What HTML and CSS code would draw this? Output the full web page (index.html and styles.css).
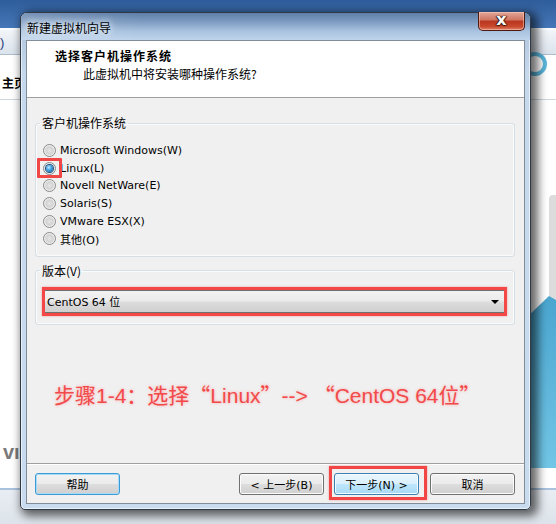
FILE: index.html
```html
<!DOCTYPE html>
<html lang="zh">
<head>
<meta charset="utf-8">
<title>新建虚拟机向导</title>
<link rel="stylesheet" href="styles.css">
</head>
<body>
<div class="desktop">
  <div class="app">
    <div class="app-toolbar"><span class="app-paren">)</span></div>
    <div class="app-tabs"><span class="app-tab">主页</span></div>
    <div class="app-content">
      <span class="app-logo">vı</span>
    </div>
    <div class="app-status"></div>
    <div class="app-right-ring"></div>
    <div class="app-right-card"></div>
    <div class="app-right-blue"></div>
  </div>

  <div class="window">
    <div class="titlebar">
      <span class="title">新建虚拟机向导</span>
      <span class="close-btn"><span class="close-x">x</span></span>
    </div>
    <div class="client">
      <div class="header">
        <div class="header-title">选择客户机操作系统</div>
        <div class="header-sub">此虚拟机中将安装哪种操作系统?</div>
      </div>
      <div class="body">
        <fieldset class="group">
          <legend class="group-label">客户机操作系统</legend>
          <div class="radio-list">
            <div class="radio-row"><span class="radio"></span><span class="radio-text">Microsoft Windows(W)</span></div>
            <div class="radio-row"><span class="radio checked"><span class="mark"></span></span><span class="radio-text">Linux(L)</span></div>
            <div class="radio-row"><span class="radio"></span><span class="radio-text">Novell NetWare(E)</span></div>
            <div class="radio-row"><span class="radio"></span><span class="radio-text">Solaris(S)</span></div>
            <div class="radio-row"><span class="radio"></span><span class="radio-text">VMware ESX(X)</span></div>
            <div class="radio-row"><span class="radio"></span><span class="radio-text">其他(O)</span></div>
          </div>
        </fieldset>
        <fieldset class="group group-version">
          <legend class="group-label">版本(V)</legend>
          <div class="highlight-box">
            <div class="combo">
              <span class="combo-text">CentOS 64 位</span>
              <span class="combo-arrow"></span>
            </div>
          </div>
        </fieldset>
        <div class="note">步骤1-4<span class="cjk">：</span>选择<span class="cjk">“</span>Linux<span class="cjk">”</span>--&gt; <span class="cjk">“</span>CentOS 64位<span class="cjk">”</span></div>
      </div>
      <div class="footer">
        <button class="btn btn-focus">帮助</button>
        <div class="nav">
          <button class="btn">&lt; 上一步(B)</button>
          <button class="btn btn-default">下一步(N) &gt;<span class="btn-mark"></span></button>
          <button class="btn btn-cancel">取消</button>
        </div>
      </div>
    </div>
  </div>
</div>
</body>
</html>
```

FILE: styles.css
```css
html, body {
  margin: 0;
  padding: 0;
}
body {
  font-family: "DejaVu Sans", "Noto Sans CJK SC", sans-serif;
  font-size: 11px;
  color: #000;
}
.desktop {
  position: relative;
  width: 556px;
  height: 524px;
  overflow: hidden;
  background: linear-gradient(#2f5d9b, #4677b8 28px, #4677b8);
}

/* background application window */
.app {
  position: absolute;
  left: 0;
  top: 28px;
  width: 556px;
  height: 496px;
  background: #fff;
  display: flex;
  flex-direction: column;
}
.app-toolbar {
  height: 27px;
  background: linear-gradient(#f2f5f9, #dbe3ec);
  border-top: 2px solid #fbfcfd;
  border-bottom: 1px solid #aebdcc;
  box-sizing: border-box;
  display: flex;
  align-items: center;
}
.app-paren {
  font-family: "Liberation Sans", sans-serif;
  font-size: 13px;
  color: #1e3c78;
  margin-left: 0;
}
.app-tabs {
  height: 45px;
  border-bottom: 1px solid #cfd6de;
  box-sizing: border-box;
  display: flex;
  align-items: center;
  padding-top: 10px;
}
.app-tab {
  font-family: "Noto Sans CJK SC", sans-serif;
  font-weight: bold;
  font-size: 12px;
  margin-left: 2px;
}
.app-content {
  flex: 1;
  position: relative;
}
.app-logo {
  position: absolute;
  left: 3px;
  bottom: 24px;
  font-family: "Liberation Sans", sans-serif;
  font-weight: bold;
  font-size: 20px;
  color: #7a7a7a;
}
.app-status {
  height: 36px;
  background: linear-gradient(#e9eef4, #dde3ea);
  border-top: 2px solid #a9c3de;
  box-sizing: border-box;
}
.app-right-ring {
  position: absolute;
  left: 523px;
  top: 24px;
  width: 16px;
  height: 16px;
  border: 4px solid #5bb6db;
  border-radius: 50%;
}
.app-right-card {
  position: absolute;
  left: 549px;
  top: 167px;
  width: 14px;
  height: 136px;
  background: #dcdcdc;
  border-radius: 4px;
}
.app-right-blue {
  position: absolute;
  left: 531px;
  top: 268px;
  width: 30px;
  height: 172px;
  background: linear-gradient(#4aa5cf, #72c6e6);
  clip-path: polygon(0 10%, 60% 0, 100% 4%, 100% 100%, 0 100%);
}

/* dialog window */
.window {
  position: absolute;
  left: 20px;
  top: 12px;
  width: 511px;
  height: 498px;
  box-sizing: border-box;
  border: 1px solid #303a46;
  border-radius: 7px 7px 5px 5px;
  background: linear-gradient(#a9c0da, #c5d8ec 60px, #c9dbef);
  box-shadow: 4px 3px 10px 3px rgba(0, 0, 0, 0.6), inset 0 0 0 1px rgba(255,255,255,0.6);
  padding: 0 5px 5px 5px;
  display: flex;
  flex-direction: column;
}
.titlebar {
  height: 27px;
  position: relative;
  display: flex;
  align-items: center;
  margin: 0 -5px;
  padding: 0 6px;
  border-radius: 6px 6px 0 0;
  background:
    linear-gradient(90deg, rgba(255,255,255,0.15) 0, rgba(40,80,130,0.0) 120px, rgba(40,80,130,0) 100%),
    linear-gradient(180deg, #5f7fa8 0, #7f9dc2 9px, #a8c2df 18px, #bfd4ec 27px);
}
.title {
  font-family: "Noto Sans CJK SC", sans-serif;
  font-size: 12px;
  color: #000;
  margin-top: 1px;
  text-shadow: 0 0 6px #eef4fb, 0 0 8px #eef4fb;
}
.close-btn {
  position: absolute;
  right: 5px;
  top: -1px;
  width: 47px;
  height: 19px;
  box-sizing: border-box;
  border: 1px solid #4d1a12;
  border-top: none;
  border-radius: 0 0 5px 5px;
  background: linear-gradient(#e3a797 0, #cf7461 45%, #b8361e 50%, #c8482c 80%, #e0836a 100%);
  box-shadow: inset 0 0 0 1px rgba(255, 210, 200, 0.5);
  display: flex;
  align-items: center;
  justify-content: center;
}
.close-x {
  font-family: "DejaVu Sans", sans-serif;
  font-weight: bold;
  font-size: 16px;
  line-height: 15px;
  color: #fff;
  margin-top: -3px;
  text-shadow: 0 0 1px #3a1a10, 1px 0 1px #3a1a10, -1px 0 1px #3a1a10, 0 1px 1px #3a1a10;
}

.client {
  flex: 1;
  border: 1px solid #828c98;
  background: #f0f0f0;
  display: flex;
  flex-direction: column;
}
.header {
  height: 57px;
  box-sizing: border-box;
  background: #fff;
  border-bottom: 1px solid #a0a0a0;
  padding: 6px 0 0 28px;
  font-family: "Noto Sans CJK SC", sans-serif;
  font-size: 12px;
  line-height: 18px;
}
.header-title {
  font-weight: bold;
  letter-spacing: 1px;
}
.header-sub {
  padding-left: 28px;
}

.body {
  flex: 1;
  padding: 17px 9px 0 8px;
  display: flex;
  flex-direction: column;
  border-bottom: 1px solid #a0a0a0;
  box-shadow: 0 1px 0 #fff;
}
.group {
  margin: 0;
  padding: 0;
  border: 1px solid #d5dfe5;
  border-radius: 3px;
  box-shadow: inset 0 0 0 1px #fafbfc;
  min-width: 0;
}
.group-label {
  margin-left: 4px;
  padding: 0 2px;
  font-family: "Noto Sans CJK SC", sans-serif;
  font-size: 12px;
  line-height: 16px;
}
.radio-list {
  padding: 11px 0 8px 7px;
  display: flex;
  flex-direction: column;
}
.radio-row {
  height: 17.6px;
  display: flex;
  align-items: center;
}
.radio {
  position: relative;
  width: 13px;
  height: 13px;
  box-sizing: border-box;
  border-radius: 50%;
  border: 1px solid #8a8a8a;
  background: radial-gradient(circle at 50% 50%, #e6e6e6 0, #d2d2d2 45%, #f8f8f8 75%);
  display: flex;
  align-items: center;
  justify-content: center;
  margin-right: 4px;
  flex: none;
}
.radio .mark {
  width: 7px;
  height: 7px;
  border-radius: 50%;
  background: radial-gradient(circle at 40% 35%, #c4ecff 0, #3c9fe0 45%, #14508e 100%);
  box-shadow: 0 0 0 1px #1f4f7f;
}
.radio.checked::after {
  content: "";
  position: absolute;
  left: -7px;
  top: -5px;
  width: 19px;
  height: 14px;
  border: 3px solid #f14646;
  border-radius: 1px;
}
.radio-text {
  font-size: 11px;
  color: #000;
}

.group-version {
  margin-top: 6px;
}
.highlight-box {
  margin: 8px 7px 8px 6px;
  border: 3px solid #f44848;
  box-shadow: 0 0 2px rgba(240, 70, 70, 0.5);
}
.combo {
  height: 23px;
  box-sizing: border-box;
  border-top: 1px solid #6f6f6f;
  border-bottom: 1px solid #6f6f6f;
  background: linear-gradient(#f2f2f2 0, #ebebeb 48%, #dddddd 52%, #cfcfcf 100%);
  display: flex;
  align-items: center;
  justify-content: space-between;
  padding: 0 5px 0 2px;
}
.combo-text {
  font-family: "DejaVu Sans", "Noto Sans CJK SC", sans-serif;
  font-size: 11px;
}
.combo-arrow {
  width: 0;
  height: 0;
  border-left: 4px solid transparent;
  border-right: 4px solid transparent;
  border-top: 4px solid #000;
  margin-top: 1px;
}

.note {
  margin-top: 57px;
  padding-left: 19px;
  font-family: "Liberation Sans", "Noto Sans CJK SC", sans-serif;
  font-size: 21px;
  line-height: 24px;
  color: #f24a4a;
  white-space: nowrap;
  text-shadow: 0 0 3px rgba(255, 120, 120, 0.6);
}
.cjk {
  font-family: "Noto Sans CJK SC", sans-serif;
}

.footer {
  height: 39px;
  box-sizing: border-box;
  padding: 9px 9px 0 8px;
  display: flex;
  justify-content: space-between;
  align-items: flex-start;
}
.nav {
  display: flex;
  gap: 10px;
}
.btn-cancel {
  margin-left: 1px;
}
.btn {
  position: relative;
  width: 85px;
  height: 22px;
  padding: 0;
  border: 1px solid #707070;
  border-radius: 3px;
  background: linear-gradient(#f2f2f2 0, #ebebeb 48%, #dddddd 52%, #cfcfcf 100%);
  box-shadow: inset 0 0 0 1px #fcfcfc;
  font-family: "DejaVu Sans", "Noto Sans CJK SC", sans-serif;
  font-size: 11px;
  color: #000;
}
.btn-focus {
  border-color: #3c9ad6;
  box-shadow: inset 0 0 0 1px #a8dcf6;
}
.btn-default {
  border-color: #3c7fb1;
  background: linear-gradient(#eaf6fd 0, #d9f0fc 48%, #bee6fd 52%, #a7d9f5 100%);
  box-shadow: inset 0 0 0 1px #f4fbfe;
}
.btn-mark {
  position: absolute;
  left: -6px;
  top: -8px;
  right: -9px;
  bottom: -6px;
  border: 3px solid #f24646;
  box-shadow: 0 0 2px rgba(240, 70, 70, 0.5);
}
```
